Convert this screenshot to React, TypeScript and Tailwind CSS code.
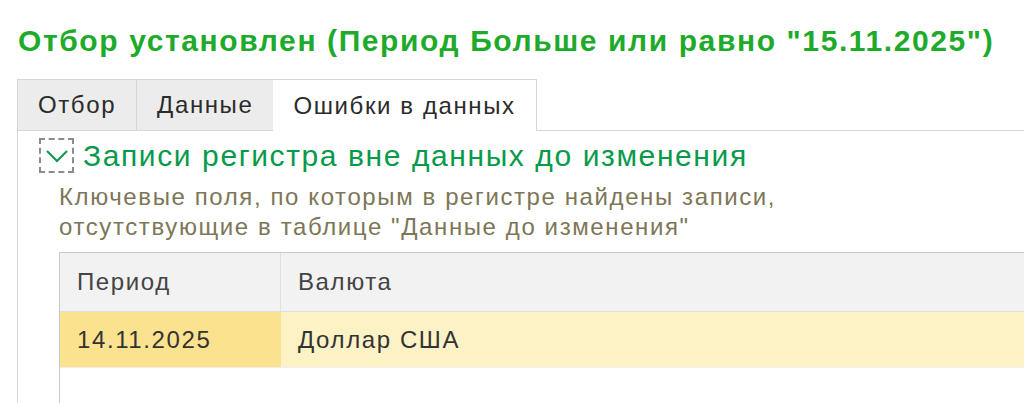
const tabs = ['Отбор', 'Данные', 'Ошибки в данных']

const App = () => {
  const active = 2
  return (
    <div
      className="w-[1024px] h-[403px] overflow-hidden bg-white tracking-[1.6px]"
      style={{ fontFamily: '"Liberation Sans", Arial, sans-serif' }}
    >
      <div className="h-[79px] pl-[18px] pt-[21px] text-[30px] leading-[40px] font-bold text-[#1eaa2a] whitespace-nowrap">
        Отбор установлен (Период Больше или равно "15.11.2025")
      </div>

      <div className="flex h-[52px] pl-[17px]">
        {tabs.map((t, i) => (
          <div
            key={t}
            className={
              i === active
                ? 'flex items-center px-[20px] text-[24px] text-[#2b2b2b] bg-white border-t border-r border-[#d6d6d6]'
                : 'flex items-center px-[20px] text-[24px] text-[#2b2b2b] bg-[#ececec] border-t border-l border-b border-[#d6d6d6]'
            }
          >
            {t}
          </div>
        ))}
        <div className="flex-1 border-b border-[#d6d6d6]" />
      </div>

      <div className="ml-[17px] border-l border-[#d6d6d6] h-[272px] pt-[7px]">
        <div className="flex items-center h-[35px] pl-[21px]">
          <div className="w-[35px] h-[35px] border-2 border-dashed border-[#8c8c8c] flex items-center justify-center">
            <svg width="24" height="14" viewBox="0 0 24 14" fill="none">
              <path d="M2 2 L12 12 L22 2" stroke="#0a9a4a" strokeWidth="2" />
            </svg>
          </div>
          <div className="ml-[9px] text-[30px] text-[#079a4b] whitespace-nowrap">
            Записи регистра вне данных до изменения
          </div>
        </div>

        <div className="pl-[41px] pt-[9px] text-[24px] leading-[30px] text-[#7d7657] whitespace-nowrap">
          <div>Ключевые поля, по которым в регистре найдены записи,</div>
          <div>отсутствующие в таблице "Данные до изменения"</div>
        </div>

        <div className="ml-[41px] mt-[10px] border-l border-t border-[#c8c8c8] h-[200px]">
          <div className="flex h-[59px] bg-[#f2f2f2] border-b border-[#dedede] text-[24px] text-[#444]">
            <div className="w-[221px] flex items-center pl-[17px] border-r border-[#e0e0e0]">Период</div>
            <div className="flex-1 flex items-center pl-[17px]">Валюта</div>
          </div>
          <div className="flex h-[56px] border-b border-[#eeeeee] text-[24px] text-[#333]">
            <div className="w-[221px] flex items-center pl-[17px] bg-[#fbe28e]">14.11.2025</div>
            <div className="flex-1 flex items-center pl-[17px] bg-[#fdf2c6]">Доллар США</div>
          </div>
        </div>
      </div>
    </div>
  )
}

export default App
